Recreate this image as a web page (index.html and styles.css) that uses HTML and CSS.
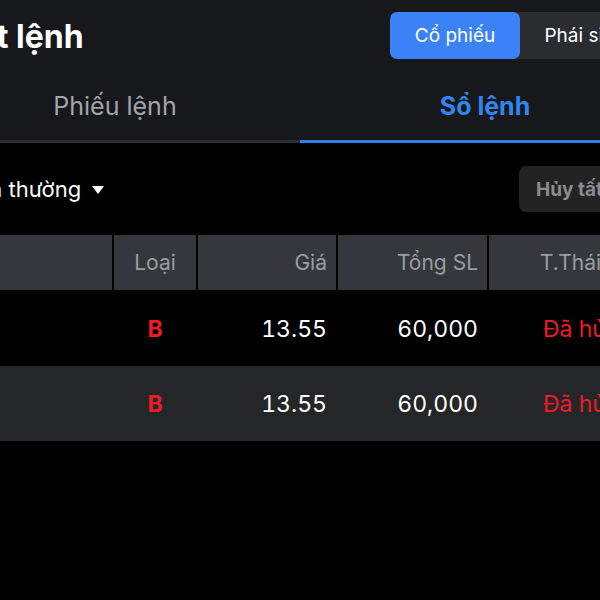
FILE: index.html
```html
<!DOCTYPE html>
<html lang="vi">
<head>
    <meta charset="UTF-8">
    <title>Đặt lệnh</title>
    <link rel="stylesheet" href="styles.css">
</head>
<body>
    <div class="screen">
        <div class="topbar">
            <h1 class="title">Đặt lệnh</h1>
            <div class="segment">
                <a href="#" class="segment-item active">Cổ phiếu</a>
                <a href="#" class="segment-item">Phái sinh</a>
            </div>
        </div>
        <div class="tabs">
            <a href="#" class="tab">Phiếu lệnh</a>
            <a href="#" class="tab active">Sổ lệnh</a>
        </div>
        <div class="filter">
            <div class="dropdown">Lệnh thường <span class="caret"></span></div>
            <button class="cancel-all">Hủy tất cả</button>
        </div>
        <div class="table">
            <div class="row head">
                <div class="cell">Mã</div>
                <div class="cell center">Loại</div>
                <div class="cell right">Giá</div>
                <div class="cell right">Tổng SL</div>
                <div class="cell status-col">T.Thái</div>
            </div>
            <div class="row">
                <div class="cell">HPG</div>
                <div class="cell center buy">B</div>
                <div class="cell right">13.55</div>
                <div class="cell right">60,000</div>
                <div class="cell status-col status">Đã hủy</div>
            </div>
            <div class="row odd">
                <div class="cell">HPG</div>
                <div class="cell center buy">B</div>
                <div class="cell right">13.55</div>
                <div class="cell right">60,000</div>
                <div class="cell status-col status">Đã hủy</div>
            </div>
        </div>
    </div>
</body>
</html>
```

FILE: styles.css
```css
body {
    margin: 0;
    background: #000;
    font-family: Inter, "Noto Sans", sans-serif;
    color: #fff;
}
.screen {
    width: 600px;
    height: 600px;
    overflow: hidden;
    background: #000;
}
.topbar {
    height: 70px;
    background: #17181b;
    display: flex;
    align-items: center;
}
.title {
    flex: 1;
    margin: 3px 0 0 -45px;
    font-size: 32px;
    font-weight: 700;
    white-space: nowrap;
}
.segment {
    display: flex;
    width: 260px;
    height: 47px;
    margin-right: -50px;
    background: #2a2c30;
    border-radius: 7px;
}
.segment-item {
    width: 130px;
    display: flex;
    align-items: center;
    justify-content: center;
    font-size: 19px;
    color: #fff;
    text-decoration: none;
    border-radius: 7px;
    white-space: nowrap;
}
.segment-item.active {
    background: #3b82f6;
}
.tabs {
    display: flex;
    margin-left: -70px;
    background: #17181b;
}
.tab {
    width: 370px;
    height: 73px;
    flex-shrink: 0;
    display: flex;
    align-items: center;
    justify-content: center;
    font-size: 25px;
    color: #a3a4a8;
    text-decoration: none;
    border-bottom: 3px solid #2b2e33;
    box-sizing: border-box;
    padding-top: 2px;
}
.tab.active {
    color: #2f86ef;
    font-weight: 700;
    border-bottom-color: #2f80e8;
}
.filter {
    height: 92px;
    display: flex;
    align-items: center;
    justify-content: space-between;
}
.dropdown {
    margin-left: -49px;
    font-size: 22px;
    white-space: nowrap;
    display: flex;
    align-items: center;
}
.caret {
    margin-left: 11px;
    margin-top: 2px;
    width: 0;
    height: 0;
    border-left: 6px solid transparent;
    border-right: 6px solid transparent;
    border-top: 8px solid #fff;
}
.cancel-all {
    width: 140px;
    height: 46px;
    margin-right: -59px;
    background: #232324;
    border: 0;
    border-radius: 7px;
    color: #8b8c8f;
    font-family: inherit;
    font-size: 19px;
    font-weight: 700;
    text-align: left;
    padding-left: 17px;
    white-space: nowrap;
}
.table {
    margin-left: -60px;
}
.row {
    display: grid;
    grid-template-columns: 172px 82px 138px 149px 172px;
    column-gap: 2px;
    height: 75px;
    align-items: center;
    font-size: 23px;
    font-variant-numeric: tabular-nums;
}
.row.odd {
    background: #242628;
}
.row.head {
    height: 55px;
    margin-bottom: 1px;
    align-items: stretch;
    font-size: 21px;
    color: #9a9ca0;
    font-variant-numeric: normal;
}
.row.head .cell {
    background: #34373b;
    display: flex;
    align-items: center;
}
.row.head .cell.center {
    justify-content: center;
}
.row.head .cell.right {
    justify-content: flex-end;
}
.cell {
    padding: 0 9px;
    white-space: nowrap;
    overflow: hidden;
}
.center {
    text-align: center;
}
.right {
    text-align: right;
}
.status-col {
    padding-left: 51px;
}
.buy {
    color: #ee1b24;
    font-weight: 700;
}
.status {
    color: #ee1b24;
    padding-left: 54px;
}
```
